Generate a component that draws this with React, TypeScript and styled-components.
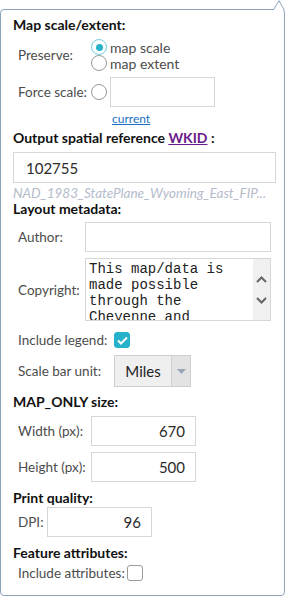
import React from 'react'
import styled, { createGlobalStyle } from 'styled-components'

const GlobalStyle = createGlobalStyle`
  body {
    margin: 0;
    background: #fff;
    font-family: Lato, 'Open Sans', sans-serif;
  }
`

const Panel = styled.div`
  position: relative;
  margin-top: 9px;
  width: 285px;
  height: 587px;
  box-sizing: border-box;
  border: 1px solid #8ea4bd;
  border-radius: 4px;
  padding: 6px 0 0 12px;
  color: #4c4c4c;
  font-size: 14px;
`

const Caret = styled.svg`
  position: absolute;
  top: -10px;
  right: -1px;
`

const Section = styled.div`
  display: flex;
  flex-direction: column;
`

const Heading = styled.div`
  font-weight: bold;
  color: #111;
  font-size: 14px;
  line-height: 18px;
  margin-top: ${p => p.$top ?? 0}px;
`

const Row = styled.div`
  display: flex;
  align-items: center;
  padding-left: 5px;
  margin-top: ${p => p.$top ?? 0}px;
`

const Label = styled.span`
  flex: none;
  width: ${p => (p.$width ? `${p.$width}px` : 'auto')};
  font-size: 13.5px;
  line-height: 18px;
  white-space: nowrap;
`

const RadioGroup = styled.div`
  display: flex;
  flex-direction: column;
`

const RadioLine = styled.label`
  display: flex;
  align-items: center;
  height: 16px;
  gap: 3px;
`

const Radio = styled.span`
  flex: none;
  width: 14px;
  height: 14px;
  border-radius: 50%;
  border: 1px solid ${p => (p.$checked ? '#6fcfdf' : '#999')};
  margin-right: ${p => p.$gap ?? 0}px;
  display: flex;
  align-items: center;
  justify-content: center;
  &::after {
    content: '';
    width: 7px;
    height: 7px;
    border-radius: 50%;
    background: ${p => (p.$checked ? '#27b2cc' : 'transparent')};
  }
`

const Input = styled.div`
  box-sizing: border-box;
  width: ${p => p.$width}px;
  height: ${p => p.$height ?? 30}px;
  margin-top: ${p => p.$top ?? 0}px;
  border: 1px solid #d6d6d6;
  background: #fff;
  display: flex;
  align-items: center;
  justify-content: ${p => (p.$right ? 'flex-end' : 'flex-start')};
  padding: 0 ${p => (p.$right ? 10 : 12)}px;
  font-size: 15px;
  color: #2b2b2b;
`

const Link = styled.a`
  color: ${p => (p.$visited ? '#6b1a8a' : '#1a6fc4')};
  text-decoration: underline;
  cursor: pointer;
`

const SmallLink = styled(Link)`
  font-size: 12px;
  line-height: 14px;
  margin: 5px 0 0 99px;
`

const Hint = styled.div`
  font-size: 13.5px;
  font-style: italic;
  color: #b4bccb;
  line-height: 12px;
  margin-top: 4px;
  white-space: nowrap;
`

const TextArea = styled.div`
  box-sizing: border-box;
  width: 186px;
  height: 63px;
  border: 1px solid #d6d6d6;
  display: flex;
  overflow: hidden;
`

const AreaText = styled.div`
  flex: 1;
  height: 59px;
  padding: 2px 0 0 3px;
  font-family: 'Liberation Mono', 'Courier New', monospace;
  font-size: 14px;
  line-height: 16px;
  color: #222;
  white-space: pre;
  overflow: hidden;
`

const Scrollbar = styled.div`
  flex: none;
  width: 17px;
  background: #f0f0f0;
  display: flex;
  flex-direction: column;
  align-items: center;
  justify-content: center;
  gap: 14px;
`

const Check = styled.span`
  flex: none;
  box-sizing: border-box;
  width: 16px;
  height: 16px;
  border-radius: 3px;
  border: 1px solid ${p => (p.$checked ? '#27b2cc' : '#9a9a9a')};
  background: ${p => (p.$checked ? '#27b2cc' : '#fff')};
  display: flex;
  align-items: center;
  justify-content: center;
`

const Select = styled.div`
  box-sizing: border-box;
  width: 77px;
  height: 32px;
  border: 1px solid #cfcfcf;
  display: flex;
  background: #efefef;
`

const SelectValue = styled.div`
  flex: 1;
  display: flex;
  align-items: center;
  justify-content: center;
  font-size: 15px;
  color: #222;
  border-right: 1px solid #cfcfcf;
`

const SelectArrow = styled.div`
  flex: none;
  width: 18px;
  background: #e3e3e3;
  display: flex;
  align-items: center;
  justify-content: center;
`

const Chevron: React.FC<{ up?: boolean }> = ({ up }) => (
  <svg width="11" height="7" viewBox="0 0 11 7">
    <path
      d={up ? 'M1 6 L5.5 1.5 L10 6' : 'M1 1 L5.5 5.5 L10 1'}
      fill="none"
      stroke="#666"
      strokeWidth="2"
    />
  </svg>
)

export default function App() {
  return (
    <>
      <GlobalStyle />
      <Panel>
        <Caret width="12" height="11" viewBox="0 0 12 11">
          <path d="M0 10.5 L6 0.7 L11.5 10.5" fill="#fff" stroke="#8ea4bd" />
        </Caret>

        <Section>
          <Heading>Map scale/extent:</Heading>
          <Row $top={5}>
            <Label $width={73}>Preserve:</Label>
            <RadioGroup>
              <RadioLine>
                <Radio $checked />
                map scale
              </RadioLine>
              <RadioLine>
                <Radio />
                map extent
              </RadioLine>
            </RadioGroup>
          </Row>
          <Row $top={6}>
            <Label $width={73}>Force scale:</Label>
            <Radio $gap={3} />
            <Input $width={105} />
          </Row>
          <SmallLink>current</SmallLink>
        </Section>

        <Section>
          <Heading $top={3}>
            Output spatial reference <Link $visited>WKID</Link> :
          </Heading>
          <Input $width={263} $height={31} $top={5}>
            102755
          </Input>
          <Hint>NAD_1983_StatePlane_Wyoming_East_FIP...</Hint>
        </Section>

        <Section>
          <Heading $top={1}>Layout metadata:</Heading>
          <Row $top={4}>
            <Label $width={67}>Author:</Label>
            <Input $width={186} />
          </Row>
          <Row $top={6}>
            <Label $width={67}>Copyright:</Label>
            <TextArea>
              <AreaText>
                {'This map/data is\nmade possible\nthrough the\nCheyenne and'}
              </AreaText>
              <Scrollbar>
                <Chevron up />
                <Chevron />
              </Scrollbar>
            </TextArea>
          </Row>
          <Row $top={10}>
            <Label $width={96}>Include legend:</Label>
            <Check $checked>
              <svg width="11" height="9" viewBox="0 0 11 9">
                <path d="M1 4.5 L4 7.5 L10 1.5" fill="none" stroke="#fff" strokeWidth="2" />
              </svg>
            </Check>
          </Row>
          <Row $top={6}>
            <Label $width={96}>Scale bar unit:</Label>
            <Select>
              <SelectValue>Miles</SelectValue>
              <SelectArrow>
                <svg width="9" height="5" viewBox="0 0 9 5">
                  <path d="M0 0 L9 0 L4.5 5 Z" fill="#9aa6b8" />
                </svg>
              </SelectArrow>
            </Select>
          </Row>
        </Section>

        <Section>
          <Heading $top={6}>MAP_ONLY size:</Heading>
          <Row $top={5}>
            <Label $width={73}>Width (px):</Label>
            <Input $width={105} $right>670</Input>
          </Row>
          <Row $top={6}>
            <Label $width={73}>Height (px):</Label>
            <Input $width={105} $right>500</Input>
          </Row>
        </Section>

        <Section>
          <Heading $top={7}>Print quality:</Heading>
          <Row $top={0}>
            <Label $width={29}>DPI:</Label>
            <Input $width={105} $right>96</Input>
          </Row>
        </Section>

        <Section>
          <Heading $top={7}>Feature attributes:</Heading>
          <Row $top={2}>
            <Label $width={109}>Include attributes:</Label>
            <Check />
          </Row>
        </Section>
      </Panel>
    </>
  )
}
